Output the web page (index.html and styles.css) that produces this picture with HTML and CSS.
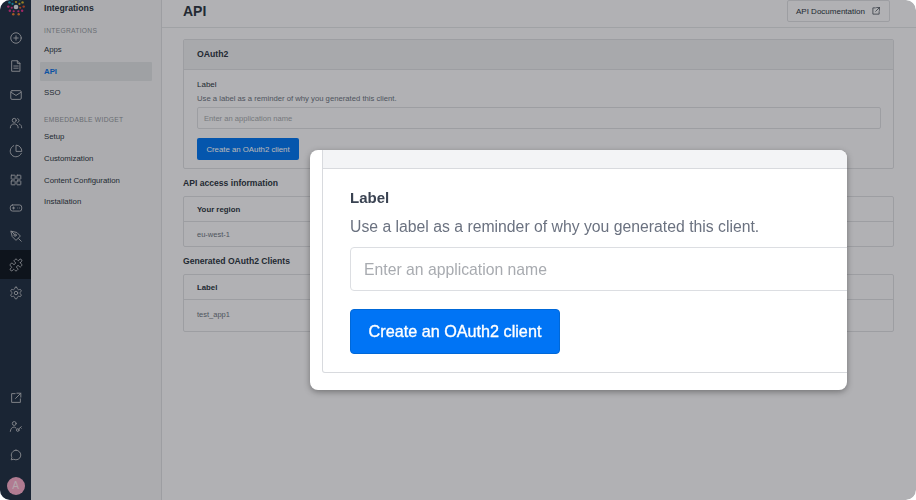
FILE: index.html
```html
<!DOCTYPE html>
<html lang="en">
<head>
  <meta charset="UTF-8">
  <meta name="viewport" content="width=device-width, initial-scale=1.0">
  <title>Integrations - API</title>
  <link rel="stylesheet" href="styles.css">
</head>
<body>
  <div class="app">
    <!-- Icon rail -->
    <nav class="rail">
      <div class="rail-logo">
        <svg width="20" height="20" viewBox="0 0 26 26">
          <circle cx="13" cy="13" r="3" fill="#e4e6ea"/>
          <circle cx="13" cy="2" r="1.600" fill="#2fae6a"/><circle cx="18" cy="3" r="1.600" fill="#2fae6a"/>
          <circle cx="8" cy="3" r="1.600" fill="#17a9c4"/><circle cx="13" cy="6.500" r="1.400" fill="#d8b62c"/>
          <circle cx="4.500" cy="7" r="1.600" fill="#17a9c4"/><circle cx="21.500" cy="7" r="1.600" fill="#d8b62c"/>
          <circle cx="8.500" cy="9" r="1.400" fill="#17a9c4"/><circle cx="17.500" cy="9" r="1.400" fill="#d8b62c"/>
          <circle cx="3" cy="12.500" r="1.600" fill="#e0318c"/><circle cx="23" cy="12.500" r="1.600" fill="#e0532c"/>
          <circle cx="7.500" cy="14" r="1.400" fill="#e0318c"/><circle cx="18.500" cy="14" r="1.400" fill="#e0532c"/>
          <circle cx="5" cy="18" r="1.600" fill="#e0318c"/><circle cx="21" cy="18" r="1.600" fill="#e0318c"/>
          <circle cx="10" cy="18.500" r="1.400" fill="#e0318c"/><circle cx="16" cy="18.500" r="1.400" fill="#e0318c"/>
          <circle cx="9.500" cy="22.500" r="1.600" fill="#e87a2c"/><circle cx="16.500" cy="22.500" r="1.600" fill="#e87a2c"/>
        </svg>
      </div>
      <a class="rail-item" href="#"><svg class="icon" viewBox="0 0 16 16"><circle cx="8" cy="8" r="6"/><path d="M8 5.500v5M5.500 8h5"/></svg></a>
      <a class="rail-item" href="#"><svg class="icon" viewBox="0 0 16 16"><path d="M3.500 2h6l3 3v9h-9zM9.500 2v3h3M5.500 8h5M5.500 10.500h5"/></svg></a>
      <a class="rail-item" href="#"><svg class="icon" viewBox="0 0 16 16"><rect x="2" y="3" width="12" height="10" rx="1.500"/><path d="M2.500 5l5.500 3.500 5.500-3.500"/></svg></a>
      <a class="rail-item" href="#"><svg class="icon" viewBox="0 0 16 16"><circle cx="6" cy="5" r="2.300"/><path d="M1.500 13.500c0-3 2-4.500 4.500-4.500s4.500 1.500 4.500 4.500M10 3a2.300 2.300 0 0 1 0 4.300M12 9.300c1.600.5 2.500 2 2.500 4.200"/></svg></a>
      <a class="rail-item" href="#"><svg class="icon icon-24" viewBox="0 0 24 24"><path d="M21.210 15.890A10 10 0 1 1 8 2.830"/><path d="M22 12A10 10 0 0 0 12 2v10z"/></svg></a>
      <a class="rail-item" href="#"><svg class="icon" viewBox="0 0 16 16"><rect x="2.500" y="2.500" width="4.500" height="4.500" rx=".5"/><rect x="9" y="2.500" width="4.500" height="4.500" rx=".5"/><rect x="2.500" y="9" width="4.500" height="4.500" rx=".5"/><rect x="9" y="9" width="4.500" height="4.500" rx=".5"/></svg></a>
      <a class="rail-item" href="#"><svg class="icon" viewBox="0 0 16 16"><rect x="1.500" y="4.500" width="13" height="7" rx="2.500"/><path d="M4 8h2.500M5.200 6.800v2.400M10 8h.01M12 8h.01"/></svg></a>
      <a class="rail-item" href="#"><svg class="icon" viewBox="0 0 16 16"><path d="M2.500 2.500l6.500 1.500 4 4-5 5-4-4zM2.500 2.500l3.500 3.500M11 11l3 3"/><circle cx="7" cy="7" r="1.300"/></svg></a>
      <a class="rail-item active" href="#"><svg class="icon icon-24" viewBox="0 0 24 24"><path d="M19.439 7.850c-.049.322.059.648.289.878l1.568 1.568c.47.47.706 1.087.706 1.704s-.235 1.233-.706 1.704l-1.611 1.611a.98.98 0 0 1-.837.276c-.47-.07-.802-.48-.968-.925a2.501 2.501 0 1 0-3.214 3.214c.446.166.855.497.925.968a.979.979 0 0 1-.276.837l-1.610 1.610a2.404 2.404 0 0 1-1.705.707 2.402 2.402 0 0 1-1.704-.706l-1.568-1.568a1.026 1.026 0 0 0-.877-.29c-.493.074-.84.504-1.020.968a2.500 2.500 0 1 1-3.237-3.237c.464-.18.894-.527.967-1.020a1.026 1.026 0 0 0-.289-.877l-1.568-1.568A2.402 2.402 0 0 1 1.998 12c0-.617.236-1.234.706-1.704L4.230 8.770c.24-.24.581-.353.917-.303.515.077.877.528 1.073 1.010a2.500 2.500 0 1 0 3.259-3.259c-.482-.196-.933-.558-1.010-1.073-.05-.336.062-.676.303-.917l1.525-1.525A2.402 2.402 0 0 1 12 1.998c.617 0 1.234.236 1.704.706l1.568 1.568c.23.23.556.338.877.29.493-.074.84-.504 1.020-.968a2.500 2.500 0 1 1 3.237 3.237c-.464.18-.894.527-.967 1.020Z"/></svg></a>
      <a class="rail-item" href="#"><svg class="icon icon-24" viewBox="0 0 24 24"><path d="M12.220 2h-.44a2 2 0 0 0-2 2v.18a2 2 0 0 1-1 1.730l-.43.25a2 2 0 0 1-2 0l-.15-.08a2 2 0 0 0-2.730.73l-.22.38a2 2 0 0 0 .73 2.730l.15.1a2 2 0 0 1 1 1.720v.51a2 2 0 0 1-1 1.740l-.15.09a2 2 0 0 0-.73 2.730l.22.38a2 2 0 0 0 2.730.73l.15-.08a2 2 0 0 1 2 0l.43.25a2 2 0 0 1 1 1.730V20a2 2 0 0 0 2 2h.44a2 2 0 0 0 2-2v-.18a2 2 0 0 1 1-1.730l.43-.25a2 2 0 0 1 2 0l.15.08a2 2 0 0 0 2.730-.73l.22-.39a2 2 0 0 0-.73-2.730l-.15-.08a2 2 0 0 1-1-1.740v-.5a2 2 0 0 1 1-1.740l.15-.09a2 2 0 0 0 .73-2.730l-.22-.38a2 2 0 0 0-2.730-.73l-.15.08a2 2 0 0 1-2 0l-.43-.25a2 2 0 0 1-1-1.730V4a2 2 0 0 0-2-2z"/><circle cx="12" cy="12" r="3"/></svg></a>
      <div class="rail-bottom">
        <a class="rail-item" href="#"><svg class="icon" viewBox="0 0 16 16"><path d="M7 3H3v10h10V9M9 2.500h4.500V7M13.500 2.500L7.500 8.500"/></svg></a>
        <a class="rail-item" href="#"><svg class="icon" viewBox="0 0 16 16"><circle cx="6" cy="4" r="2.200"/><path d="M1.500 13c.3-3 2-5 4.500-5l2 1.200"/><circle cx="10" cy="11.500" r="1.500"/><path d="M11 10.500l3-3M13 8.500l1 1"/></svg></a>
        <a class="rail-item" href="#"><svg class="icon" viewBox="0 0 16 16"><path d="M8 2.500a5.500 5.500 0 1 1-2.500 10.400L2.500 13.500l.8-2.800A5.500 5.500 0 0 1 8 2.500z"/></svg></a>
        <div class="avatar">A</div>
      </div>
    </nav>

    <!-- Section navigation -->
    <aside class="subnav">
      <div class="subnav-title">Integrations</div>
      <div class="subnav-section">INTEGRATIONS</div>
      <a class="subnav-link" href="#">Apps</a>
      <a class="subnav-link current" href="#">API</a>
      <a class="subnav-link" href="#">SSO</a>
      <div class="subnav-section lower">EMBEDDABLE WIDGET</div>
      <a class="subnav-link" href="#">Setup</a>
      <a class="subnav-link" href="#">Customization</a>
      <a class="subnav-link" href="#">Content Configuration</a>
      <a class="subnav-link" href="#">Installation</a>
    </aside>

    <main class="main">
      <header class="page-head">
        <h1>API</h1>
        <a class="doc-btn" href="#">API Documentation
          <svg class="icon" viewBox="0 0 16 16"><path d="M7 3H3v10h10V9M9 2.500h4.500V7M13.500 2.500L7.500 8.500"/></svg>
        </a>
      </header>
      <div class="content">
        <section class="card">
          <div class="card-head">OAuth2</div>
          <div class="card-body">
            <div class="field-label">Label</div>
            <div class="field-help">Use a label as a reminder of why you generated this client.</div>
            <input class="field-input" type="text" placeholder="Enter an application name">
            <button class="primary-btn">Create an OAuth2 client</button>
          </div>
        </section>
        <h2>API access information</h2>
        <section class="card">
          <div class="card-head small">Your region</div>
          <div class="card-row">eu-west-1</div>
        </section>
        <h2 class="second">Generated OAuth2 Clients</h2>
        <section class="card">
          <div class="card-head small">Label</div>
          <div class="card-row tall">test_app1</div>
        </section>
      </div>
    </main>

    <div class="overlay"></div>

    <!-- Enlarged callout of the form -->
    <div class="callout">
      <div class="callout-card">
        <div class="callout-head"></div>
        <div class="callout-body">
          <div class="callout-label">Label</div>
          <div class="callout-help">Use a label as a reminder of why you generated this client.</div>
          <input class="callout-input" type="text" placeholder="Enter an application name">
          <button class="callout-btn">Create an OAuth2 client</button>
        </div>
      </div>
    </div>
  </div>
</body>
</html>
```

FILE: styles.css
```css
* {
  box-sizing: border-box;
}

body {
  margin: 0;
  background: #fff;
  font-family: "Liberation Sans", Arial, sans-serif;
  color: #2b3441;
}

a {
  text-decoration: none;
  color: inherit;
}

.app {
  position: relative;
  display: flex;
  width: 916px;
  height: 500px;
  border-radius: 10px;
  overflow: hidden;
}

.icon {
  width: 14px;
  height: 14px;
  fill: none;
  stroke: currentColor;
  stroke-width: 1.1;
  stroke-linecap: round;
  stroke-linejoin: round;
}

.icon-24 {
  stroke-width: 1.65;
}

/* Icon rail */
.rail {
  width: 31px;
  flex-shrink: 0;
  display: flex;
  flex-direction: column;
  background: #1f2e42;
  color: #b4b8be;
}

.rail-logo {
  height: 24px;
  display: flex;
  justify-content: center;
  overflow: hidden;
}

.rail-logo svg {
  margin-top: -3px;
  flex-shrink: 0;
}

.rail-item {
  height: 28.3px;
  flex-shrink: 0;
  display: flex;
  align-items: center;
  justify-content: center;
}

.rail-item.active {
  background: #0e1620;
}

.rail-bottom {
  margin-top: auto;
  padding-bottom: 5px;
  display: flex;
  flex-direction: column;
  align-items: stretch;
}

.avatar {
  width: 18px;
  height: 18px;
  margin: 8px auto 0;
  border-radius: 50%;
  background: #f5aac8;
  color: #fbe6ee;
  font-size: 10px;
  line-height: 18px;
  text-align: center;
}

/* Section navigation */
.subnav {
  width: 131px;
  flex-shrink: 0;
  padding: 3px 9px 0;
  background: #eff0f2;
  border-right: 1px solid #dadce0;
}

.subnav-title {
  padding-left: 4px;
  height: 17px;
  font-size: 8.700px;
  line-height: 11px;
  font-weight: 700;
}

.subnav-section {
  padding-left: 4px;
  margin-top: 6px;
  height: 14px;
  font-size: 6.700px;
  line-height: 10px;
  letter-spacing: .3px;
  color: #8f949c;
}

.subnav-section.lower {
  margin-top: 13px;
  height: 12px;
}

.subnav-link {
  display: block;
  height: 19px;
  margin-bottom: 2.700px;
  padding-left: 4px;
  border-radius: 1px;
  font-size: 7.800px;
  line-height: 19px;
}

.subnav-link.current {
  background: #dde0e3;
  color: #0a6fe0;
  font-weight: 700;
}

/* Page */
.main {
  flex: 1;
  min-width: 0;
  background: #f6f7f9;
}

.page-head {
  height: 28px;
  display: flex;
  justify-content: space-between;
  align-items: flex-start;
  padding: 0 26px 0 21px;
  border-bottom: 1px solid #dfe1e4;
}

.page-head h1 {
  margin: 3px 0 0;
  font-size: 14px;
  line-height: 17px;
  font-weight: 700;
}

.doc-btn {
  height: 22px;
  width: 103px;
  padding: 0 8px;
  display: flex;
  align-items: center;
  justify-content: space-between;
  border: 1px solid #dadce0;
  border-radius: 2px;
  font-size: 8px;
}

.doc-btn .icon {
  width: 10px;
  height: 10px;
}

.content {
  padding: 11px 22px 0 21px;
}

.card {
  border: 1px solid #dadce0;
  border-radius: 2px;
}

.card-head {
  height: 30px;
  padding-left: 13px;
  background: #eaebee;
  border-bottom: 1px solid #dadce0;
  font-size: 8.700px;
  line-height: 29px;
  font-weight: 700;
}

.card-head.small {
  height: 25px;
  background: none;
  font-size: 7.800px;
  line-height: 25px;
}

.card-body {
  height: 98px;
  padding: 8px 12px 0 13px;
}

.field-label {
  height: 14px;
  font-size: 8px;
  line-height: 14px;
}

.field-help {
  height: 15px;
  font-size: 7.700px;
  line-height: 13px;
  color: #6b7280;
}

.field-input {
  display: block;
  width: 100%;
  height: 22px;
  padding: 0 6px;
  border: 1px solid #dadce0;
  border-radius: 2px;
  background: none;
  font: 7.600px "Liberation Sans", Arial, sans-serif;
}

.field-input::placeholder {
  color: #a3a6ab;
}

.primary-btn {
  display: block;
  width: 102px;
  height: 22px;
  margin-top: 9px;
  padding: 0;
  border: 0;
  border-radius: 2px;
  background: #0074f0;
  color: #fff;
  font: 7.800px "Liberation Sans", Arial, sans-serif;
}

.content h2 {
  margin: 9px 0 7px;
  font-size: 8.600px;
  line-height: 11px;
  font-weight: 700;
}

.content h2.second {
  margin: 9px 0 7px;
}

.card-row {
  height: 24px;
  padding-left: 13px;
  font-size: 7.500px;
  line-height: 25px;
  color: #6b7280;
}

.card-row.tall {
  height: 31px;
  line-height: 30px;
}

.overlay {
  position: absolute;
  inset: 0;
  background: rgba(17, 17, 20, .3);
  backdrop-filter: blur(.7px);
}

/* Enlarged callout */
.callout {
  position: absolute;
  left: 310px;
  top: 150px;
  width: 537px;
  height: 240px;
  padding: 0 0 17px 12px;
  background: #fff;
  border-radius: 8px;
  box-shadow: 0 2px 6px rgba(0, 0, 0, .35);
  overflow: hidden;
}

.callout-card {
  width: 700px;
  height: 223px;
  border: 1px solid #d8dade;
  border-top: 0;
  border-radius: 0 0 0 3px;
}

.callout-head {
  height: 19px;
  background: #f3f4f6;
  border-bottom: 1px solid #d8dade;
}

.callout-body {
  padding: 19px 27px 0;
}

.callout-label {
  height: 20px;
  font-size: 15px;
  line-height: 20px;
  font-weight: 700;
  color: #3a4352;
}

.callout-help {
  height: 39px;
  padding-top: 9px;
  font-size: 15.770px;
  line-height: 20px;
  color: #6b7280;
}

.callout-input {
  display: block;
  width: 100%;
  height: 44px;
  padding: 1px 13px 0;
  border: 1px solid #dcdee2;
  border-radius: 4px;
  background: #fff;
  font: 15.750px "Liberation Sans", Arial, sans-serif;
}

.callout-input::placeholder {
  color: #a8abb0;
}

.callout-btn {
  display: block;
  width: 210px;
  height: 45px;
  margin-top: 18px;
  padding: 0;
  border: 1px solid #0068d8;
  border-radius: 4px;
  background: #0074f5;
  color: #fff;
  font: 400 16.200px "Liberation Sans", Arial, sans-serif;
  -webkit-text-stroke: .35px #fff;
}
```
